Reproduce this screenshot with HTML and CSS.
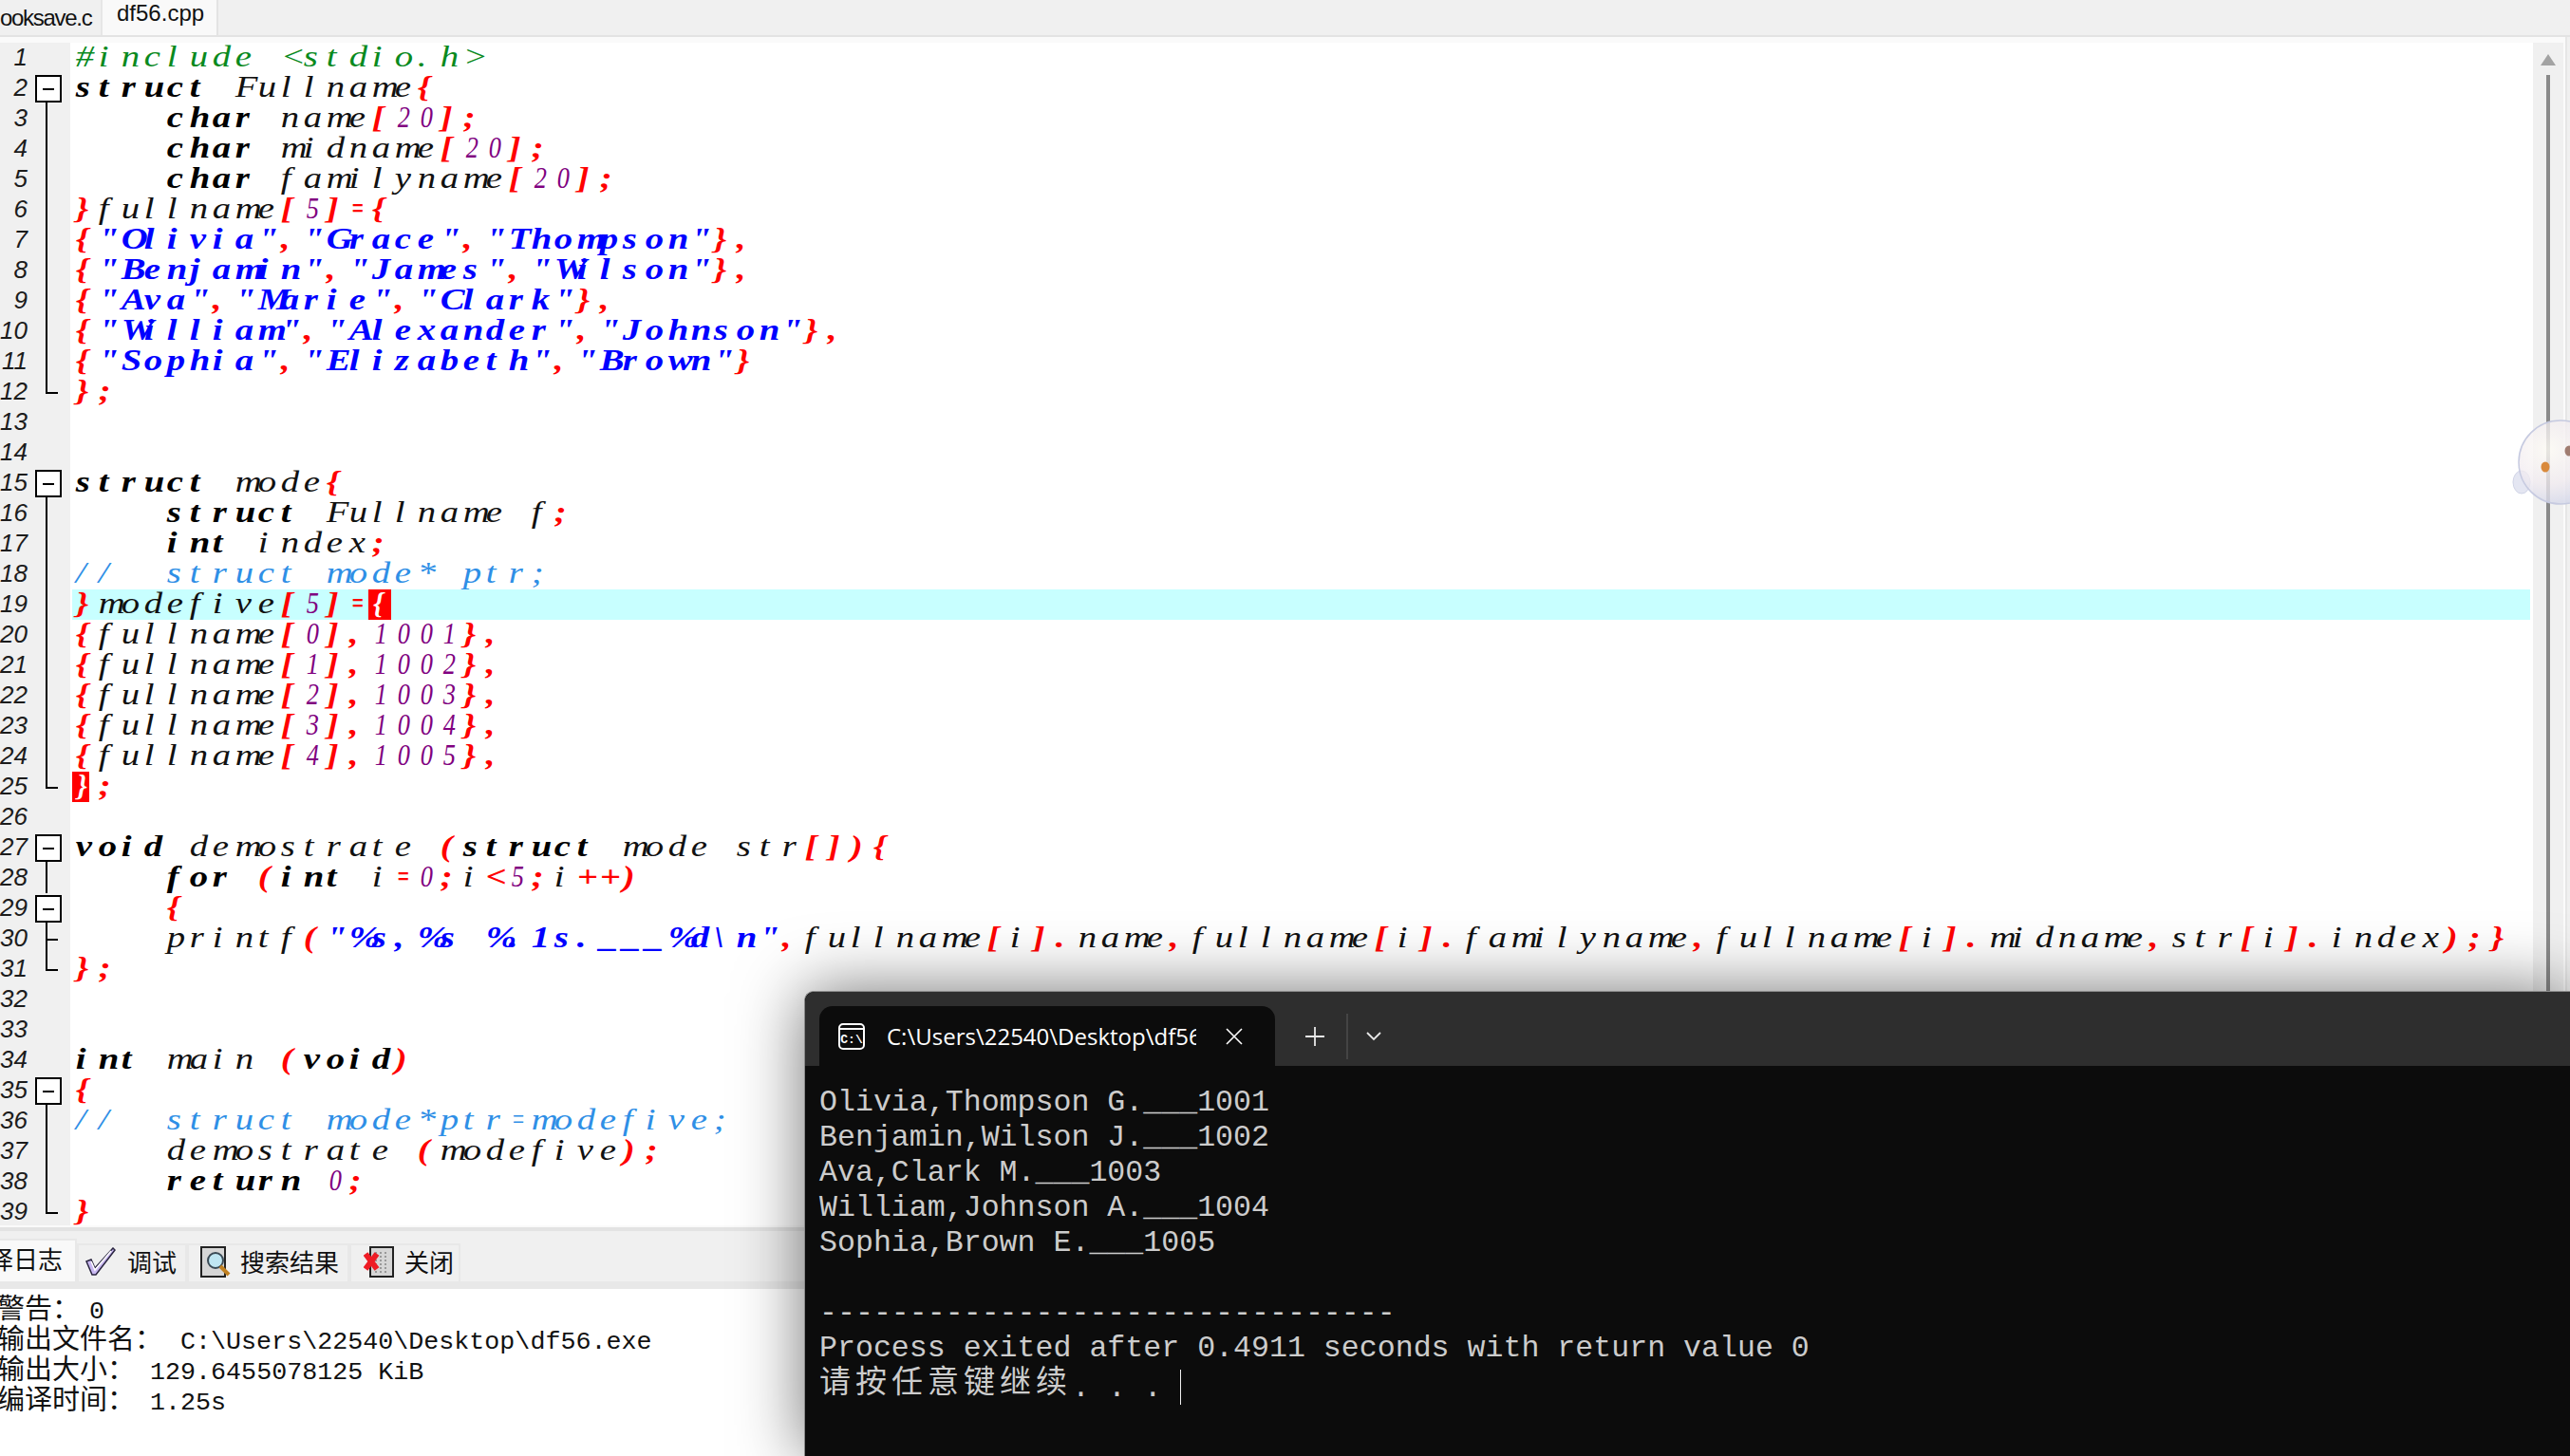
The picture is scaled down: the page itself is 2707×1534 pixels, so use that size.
FILE: index.html
```html
<!DOCTYPE html>
<html lang="zh">
<head>
<meta charset="utf-8">
<title>df56.cpp</title>
<link rel="stylesheet" href="styles.css">
</head>
<body>
<div class="ide">
  <div class="filetabs">
    <div class="filetab">ooksave.c</div>
    <div class="filetab active">df56.cpp</div>
  </div>
  <div class="frame">
    <div class="editor">
      <div class="lines">
        <div class="row"><span class="ln">1</span><span class="fold"></span><div class="code"><span class="p">#include &lt;stdio.h&gt;</span></div></div>
        <div class="row"><span class="ln">2</span><span class="fold open"></span><div class="code"><span class="k">struct</span> Fullname<span class="o">{</span></div></div>
        <div class="row"><span class="ln">3</span><span class="fold mid"></span><div class="code">    <span class="k">char</span> name<span class="o">[</span><span class="n">20</span><span class="o">];</span></div></div>
        <div class="row"><span class="ln">4</span><span class="fold mid"></span><div class="code">    <span class="k">char</span> midname<span class="o">[</span><span class="n">20</span><span class="o">];</span></div></div>
        <div class="row"><span class="ln">5</span><span class="fold mid"></span><div class="code">    <span class="k">char</span> familyname<span class="o">[</span><span class="n">20</span><span class="o">];</span></div></div>
        <div class="row"><span class="ln">6</span><span class="fold mid"></span><div class="code"><span class="o">}</span>fullname<span class="o">[</span><span class="n">5</span><span class="o">]<span class="eq">=</span>{</span></div></div>
        <div class="row"><span class="ln">7</span><span class="fold mid"></span><div class="code"><span class="o">{</span><span class="s">"Olivia"</span><span class="o">,</span><span class="s">"Grace"</span><span class="o">,</span><span class="s">"Thompson"</span><span class="o">},</span></div></div>
        <div class="row"><span class="ln">8</span><span class="fold mid"></span><div class="code"><span class="o">{</span><span class="s">"Benjamin"</span><span class="o">,</span><span class="s">"James"</span><span class="o">,</span><span class="s">"Wilson"</span><span class="o">},</span></div></div>
        <div class="row"><span class="ln">9</span><span class="fold mid"></span><div class="code"><span class="o">{</span><span class="s">"Ava"</span><span class="o">,</span><span class="s">"Marie"</span><span class="o">,</span><span class="s">"Clark"</span><span class="o">},</span></div></div>
        <div class="row"><span class="ln">10</span><span class="fold mid"></span><div class="code"><span class="o">{</span><span class="s">"William"</span><span class="o">,</span><span class="s">"Alexander"</span><span class="o">,</span><span class="s">"Johnson"</span><span class="o">},</span></div></div>
        <div class="row"><span class="ln">11</span><span class="fold mid"></span><div class="code"><span class="o">{</span><span class="s">"Sophia"</span><span class="o">,</span><span class="s">"Elizabeth"</span><span class="o">,</span><span class="s">"Brown"</span><span class="o">}</span></div></div>
        <div class="row"><span class="ln">12</span><span class="fold end"></span><div class="code"><span class="o">};</span></div></div>
        <div class="row"><span class="ln">13</span><span class="fold"></span><div class="code"></div></div>
        <div class="row"><span class="ln">14</span><span class="fold"></span><div class="code"></div></div>
        <div class="row"><span class="ln">15</span><span class="fold open"></span><div class="code"><span class="k">struct</span> mode<span class="o">{</span></div></div>
        <div class="row"><span class="ln">16</span><span class="fold mid"></span><div class="code">    <span class="k">struct</span> Fullname f<span class="o">;</span></div></div>
        <div class="row"><span class="ln">17</span><span class="fold mid"></span><div class="code">    <span class="k">int</span> index<span class="o">;</span></div></div>
        <div class="row"><span class="ln">18</span><span class="fold mid"></span><div class="code"><span class="c">//  struct mode* ptr;</span></div></div>
        <div class="row"><span class="ln">19</span><span class="fold mid"></span><div class="code current"><span class="o">}</span>modefive<span class="o">[</span><span class="n">5</span><span class="o">]<span class="eq">=</span></span><span class="brace">{</span></div></div>
        <div class="row"><span class="ln">20</span><span class="fold mid"></span><div class="code"><span class="o">{</span>fullname<span class="o">[</span><span class="n">0</span><span class="o">],</span><span class="n">1001</span><span class="o">},</span></div></div>
        <div class="row"><span class="ln">21</span><span class="fold mid"></span><div class="code"><span class="o">{</span>fullname<span class="o">[</span><span class="n">1</span><span class="o">],</span><span class="n">1002</span><span class="o">},</span></div></div>
        <div class="row"><span class="ln">22</span><span class="fold mid"></span><div class="code"><span class="o">{</span>fullname<span class="o">[</span><span class="n">2</span><span class="o">],</span><span class="n">1003</span><span class="o">},</span></div></div>
        <div class="row"><span class="ln">23</span><span class="fold mid"></span><div class="code"><span class="o">{</span>fullname<span class="o">[</span><span class="n">3</span><span class="o">],</span><span class="n">1004</span><span class="o">},</span></div></div>
        <div class="row"><span class="ln">24</span><span class="fold mid"></span><div class="code"><span class="o">{</span>fullname<span class="o">[</span><span class="n">4</span><span class="o">],</span><span class="n">1005</span><span class="o">},</span></div></div>
        <div class="row"><span class="ln">25</span><span class="fold end"></span><div class="code"><span class="brace short">}</span><span class="o">;</span></div></div>
        <div class="row"><span class="ln">26</span><span class="fold"></span><div class="code"></div></div>
        <div class="row"><span class="ln">27</span><span class="fold open"></span><div class="code"><span class="k">void</span> demostrate <span class="o">(</span><span class="k">struct</span> mode str<span class="o">[]){</span></div></div>
        <div class="row"><span class="ln">28</span><span class="fold mid"></span><div class="code">    <span class="k">for</span> <span class="o">(</span><span class="k">int</span> i<span class="o eq">=</span><span class="n">0</span><span class="o">;</span>i<span class="o">&lt;</span><span class="n">5</span><span class="o">;</span>i<span class="o">++)</span></div></div>
        <div class="row"><span class="ln">29</span><span class="fold open"></span><div class="code">    <span class="o">{</span></div></div>
        <div class="row"><span class="ln">30</span><span class="fold tick"></span><div class="code">    printf<span class="o">(</span><span class="s">"%s,%s %.1s.___%d\n"</span><span class="o">,</span>fullname<span class="o">[</span>i<span class="o">].</span>name<span class="o">,</span>fullname<span class="o">[</span>i<span class="o">].</span>familyname<span class="o">,</span>fullname<span class="o">[</span>i<span class="o">].</span>midname<span class="o">,</span>str<span class="o">[</span>i<span class="o">].</span>index<span class="o">);}</span></div></div>
        <div class="row"><span class="ln">31</span><span class="fold end"></span><div class="code"><span class="o">};</span></div></div>
        <div class="row"><span class="ln">32</span><span class="fold"></span><div class="code"></div></div>
        <div class="row"><span class="ln">33</span><span class="fold"></span><div class="code"></div></div>
        <div class="row"><span class="ln">34</span><span class="fold"></span><div class="code"><span class="k">int</span> main <span class="o">(</span><span class="k">void</span><span class="o">)</span></div></div>
        <div class="row"><span class="ln">35</span><span class="fold open"></span><div class="code"><span class="o">{</span></div></div>
        <div class="row"><span class="ln">36</span><span class="fold mid"></span><div class="code"><span class="c">//  struct mode*ptr<span class="eq">=</span>modefive;</span></div></div>
        <div class="row"><span class="ln">37</span><span class="fold mid"></span><div class="code">    demostrate <span class="o">(</span>modefive<span class="o">);</span></div></div>
        <div class="row"><span class="ln">38</span><span class="fold mid"></span><div class="code">    <span class="k">return</span> <span class="n">0</span><span class="o">;</span></div></div>
        <div class="row"><span class="ln">39</span><span class="fold end"></span><div class="code"><span class="o">}</span></div></div>
      </div>
      <div class="scrollbar">
        <span class="arrow"></span>
        <span class="thumb"></span>
      </div>
    </div>
  </div>
  <div class="panel">
    <div class="paneltabs">
      <div class="ptab active"><span class="clip">译日志</span></div>
      <div class="ptab">
        <svg class="picon" width="34" height="30" viewBox="0 0 34 30"><path d="M2 15 L7 13 L11 22 L30 1 L32 3 L12 29 L8 29 Z" fill="#c9b8f2" stroke="#2a2540" stroke-width="1.5"/><path d="M7 15 L11 24 L28 4" fill="none" stroke="#fff" stroke-width="1.5"/></svg>
        调试
      </div>
      <div class="ptab">
        <svg class="picon" width="32" height="33" viewBox="0 0 32 33"><rect x="1" y="1" width="25" height="31" fill="#d6d6d6" stroke="#222" stroke-width="2"/><circle cx="16" cy="15" r="8" fill="#bfe6f2" stroke="#3a4a55" stroke-width="2"/><path d="M21 21 L30 30" stroke="#c08020" stroke-width="4"/></svg>
        搜索结果
      </div>
      <div class="ptab">
        <svg class="picon" width="32" height="33" viewBox="0 0 32 33"><rect x="7" y="1" width="24" height="31" fill="#d6d6d6" stroke="#222" stroke-width="2"/><path d="M13 6 V28 M18 6 V28 M23 6 V28" stroke="#999" stroke-width="2" stroke-dasharray="2 2"/><path d="M2 8 L14 24 M14 8 L2 24" stroke="#ee1c25" stroke-width="6"/></svg>
        关闭
      </div>
    </div>
    <div class="log">
      <div class="logline tight"><span class="cjk">警告：</span> 0</div>
      <div class="logline wide"><span class="cjk">输出文件名：</span> C:\Users\22540\Desktop\df56.exe</div>
      <div class="logline"><span class="cjk">输出大小：</span> 129.6455078125 KiB</div>
      <div class="logline"><span class="cjk">编译时间：</span> 1.25s</div>
    </div>
  </div>
</div>

<svg class="mascot" width="80" height="100" viewBox="0 0 80 100">
  <defs>
    <radialGradient id="bubble" cx="35%" cy="35%" r="75%">
      <stop offset="0" stop-color="#fffdf6" stop-opacity=".8"/>
      <stop offset=".55" stop-color="#f1ebf0" stop-opacity=".75"/>
      <stop offset="1" stop-color="#ccd2e8" stop-opacity=".85"/>
    </radialGradient>
  </defs>
  <ellipse cx="11" cy="68" rx="9" ry="12" fill="#e4e6f2" stroke="#d0d4e6"/>
  <circle cx="52" cy="47" r="44" fill="url(#bubble)" stroke="#c6cae0" stroke-width="1.5"/>
  <ellipse cx="36" cy="52" rx="4.5" ry="5.5" fill="#d98a3c"/>
  <ellipse cx="61" cy="35" rx="4.5" ry="5.5" fill="#a07c70"/>
</svg>

<div class="terminal">
  <div class="titlebar">
    <div class="termtab">
      <svg class="termicon" width="28" height="28" viewBox="0 0 28 28"><rect x="1" y="1" width="26" height="26" rx="4" fill="none" stroke="#fff" stroke-width="2"/><path d="M1 6 H27" stroke="#fff" stroke-width="2"/><text x="14" y="21" text-anchor="middle" class="termicon-text">C:\</text></svg>
      <span class="termtitle">C:\Users\22540\Desktop\df56.exe</span>
      <svg class="termclose" width="18" height="18" viewBox="0 0 18 18"><path d="M1 1 L17 17 M17 1 L1 17" stroke="#fff" stroke-width="1.6"/></svg>
    </div>
    <svg class="termplus" width="22" height="22" viewBox="0 0 22 22"><path d="M11 1 V21 M1 11 H21" stroke="#e8e8e8" stroke-width="1.8"/></svg>
    <span class="termdiv"></span>
    <svg class="termchev" width="16" height="10" viewBox="0 0 16 10"><path d="M1 1 L8 8 L15 1" fill="none" stroke="#e8e8e8" stroke-width="1.8"/></svg>
  </div>
<pre class="console">Olivia,Thompson G.___1001
Benjamin,Wilson J.___1002
Ava,Clark M.___1003
William,Johnson A.___1004
Sophia,Brown E.___1005

--------------------------------
Process exited after 0.4911 seconds with return value 0
<span class="prompt">请按任意键继续</span>. . . <span class="caret"></span></pre>
</div>
<script src="cells.js"></script>
</body>
</html>
```

FILE: styles.css
```css
* { box-sizing: border-box; }
html, body { margin: 0; height: 100%; overflow: hidden; }
body {
  position: relative;
  width: 2707px;
  height: 1534px;
  background: #f0f0f0;
  font-family: "Liberation Sans", sans-serif;
  color: #000;
}
.ide { display: flex; flex-direction: column; height: 100%; }

/* file tabs */
.filetabs {
  display: flex;
  height: 39px;
  flex: none;
  background: #f0f0f0;
  border-bottom: 2px solid #e3e3e3;
}
.filetab {
  height: 37px;
  font-size: 24px;
  line-height: 28px;
  color: #111;
}
.filetab:first-child {
  width: 108px;
  letter-spacing: -1.3px;
  white-space: nowrap;
  border-right: 2px solid #e6e6e6;
  padding-top: 5px;
}
.filetab.active {
  width: 122px;
  padding-left: 15px;
  background: #f9f9f9;
  border-right: 2px solid #e3e3e3;
}

/* editor */
.frame {
  flex: none;
  height: 1254px;
  width: 2704px;
  padding-top: 6px;
  padding-right: 2px;
  background: #fafafa;
  border-right: 2px solid #e6e6e6;
}
.editor { display: flex; height: 1246px; overflow: hidden; }
.lines { flex: 1; min-width: 0; background: #fff; }
.row { display: flex; height: 32px; }
.ln {
  width: 37px;
  flex: none;
  padding-right: 8px;
  text-align: right;
  font-size: 26px;
  font-style: italic;
  line-height: 30px;
  color: #1c1c1c;
  background: #f0f0f0;
}
.fold {
  width: 37px;
  flex: none;
  background-color: #f0f0f0;
  background-repeat: no-repeat;
  border-right: 13px solid #f0f0f0;
}
.fold.mid { background-image: linear-gradient(#000, #000); background-position: 11px 0; background-size: 2px 100%; }
.fold.end {
  background-image: linear-gradient(#000, #000), linear-gradient(#000, #000);
  background-position: 11px 0, 11px 16px;
  background-size: 2px 18px, 13px 2px;
}
.fold.tick {
  background-image: linear-gradient(#000, #000), linear-gradient(#000, #000);
  background-position: 11px 0, 11px 16px;
  background-size: 2px 100%, 13px 2px;
}
.fold.open { background-image: linear-gradient(#000, #000); background-position: 11px 27px; background-size: 2px 5px; }
.fold.open::before {
  content: "";
  display: block;
  margin-top: 2px;
  height: 25px;
  width: 24px;
  border: 2px solid #000;
  background: #fff linear-gradient(#000, #000) center / 12px 2px no-repeat;
}
.code {
  flex: 1;
  min-width: 0;
  margin-left: 2px;
  margin-right: 3px;
  white-space: pre;
  font-family: "Liberation Serif", serif;
  font-style: italic;
  font-size: 31px;
  line-height: 30px;
  color: #111;
}
.code.current { background: #c8ffff; }
.cell { display: inline-block; width: 24px; height: 32px; vertical-align: top; }
.glyph { display: inline-block; transform: scaleX(1.25); transform-origin: 5px 50%; margin-left: 5px; }
.k { font-weight: 700; color: #000; }
.s { font-weight: 700; color: #0000ff; }
.o { font-weight: 700; color: #ff0000; }
.n { color: #800080; }
.n .glyph { transform: scaleX(0.85); margin-left: 6px; }
.eq .glyph { transform: scaleX(0.7); }
.p { color: #0a8a1e; }
.c { color: #2f8fe6; }
.brace { font-weight: 700; color: #fff; }
.brace .cell { background: #ff0000; }
.brace .glyph { transform: none; }
.brace.short .cell { background: linear-gradient(#ff0000, #ff0000) 0 0 / 18px 100% no-repeat; }

.scrollbar {
  width: 32px;
  flex: none;
  background: #f0f0f0;
  display: flex;
  flex-direction: column;
  align-items: center;
  padding-top: 12px;
}
.arrow {
  width: 0;
  height: 0;
  border-left: 8px solid transparent;
  border-right: 8px solid transparent;
  border-bottom: 12px solid #a3a3a3;
}
.thumb { width: 4px; flex: 1; margin-top: 10px; background: #8a8a8a; }

/* bottom panel */
.panel { flex: 1; display: flex; flex-direction: column; min-height: 0; }
.paneltabs {
  flex: none;
  height: 65px;
  border-top: 4px solid #e3e3e3;
  border-bottom: 8px solid #e8e8e8;
  background: #f0f0f0;
  display: flex;
  align-items: flex-end;
  font-family: "Noto Sans CJK SC", sans-serif;
  font-size: 26px;
  color: #111;
}
.ptab {
  height: 40px;
  padding-bottom: 4px;
  display: flex;
  align-items: center;
  border: 2px solid #e8e8e8;
  border-bottom: 0;
  white-space: nowrap;
  line-height: 34px;
}
.ptab:nth-child(2) { width: 116px; padding-left: 6px; gap: 11px; }
.ptab:nth-child(3) { width: 171px; padding-left: 12px; gap: 10px; }
.ptab:nth-child(4) { width: 117px; padding-left: 13px; gap: 11px; }
.ptab.active {
  width: 81px;
  height: 45px;
  background: #f9f9f9;
  padding: 0 0 5px;
  overflow: hidden;
  border-left: 0;
}
.clip { margin-left: -12px; }
.picon { flex: none; }
.log {
  flex: 1;
  background: #fff;
  padding-top: 2px;
  font-family: "Liberation Mono", monospace;
  font-size: 26.7px;
  line-height: 32px;
  color: #111;
}
.logline { height: 32px; margin-left: -3px; white-space: pre; }
.logline.tight { word-spacing: -6px; }
.logline.wide { word-spacing: 3px; }
.cjk { font-family: "Noto Sans CJK SC", sans-serif; font-size: 29px; line-height: 32px; }

/* mascot peeking from the desktop edge */
.mascot { position: absolute; left: 2645px; top: 440px; }

/* terminal window */
.terminal {
  position: absolute;
  left: 847px;
  top: 1044px;
  right: 0;
  bottom: 0;
  background: #0c0c0c;
  border-top-left-radius: 10px;
  border-left: 1px solid #8a8a8a;
  border-top: 1px solid #8a8a8a;
  box-shadow: 0 0 70px rgba(0, 0, 0, 0.55);
}
.titlebar {
  height: 78px;
  background: #2e2e2e;
  border-top-left-radius: 10px;
  display: flex;
  align-items: center;
  padding-left: 15px;
}
.termtab {
  width: 480px;
  height: 63px;
  margin-top: 15px;
  background: #0c0c0c;
  border-radius: 14px 14px 0 0;
  display: flex;
  align-items: center;
  padding-left: 20px;
  color: #fff;
  flex: none;
}
.termicon { flex: none; }
.termicon-text { font-family: "Liberation Mono", monospace; font-size: 13px; font-weight: 700; fill: #fff; }
.termtitle {
  width: 326px;
  margin-left: 23px;
  overflow: hidden;
  white-space: nowrap;
  flex: none;
  font-family: "Open Sans", sans-serif;
  font-size: 24px;
  line-height: 32px;
}
.termclose { flex: none; margin-left: 31px; }
.termplus { flex: none; margin: 15px 0 0 31px; }
.termdiv { width: 2px; height: 48px; flex: none; margin: 15px 0 0 22px; background: #454545; }
.termchev { flex: none; margin: 15px 0 0 19px; }
.console {
  margin: 0;
  padding: 20px 0 0 15px;
  font-family: "Liberation Mono", monospace;
  font-size: 31.6px;
  line-height: 37px;
  color: #cccccc;
}
.prompt {
  font-family: "Noto Sans CJK SC", sans-serif;
  font-size: 33px;
  letter-spacing: 5px;
  line-height: 37px;
  position: relative;
  top: -4px;
}
.caret {
  display: inline-block;
  width: 1px;
  height: 37px;
  background: #f0f0f0;
  vertical-align: -9px;
}
```

FILE: cells.js
```js
// The editor draws every character in a fixed-width cell, whatever the glyph's own width.
document.querySelectorAll(".code").forEach(function (line) {
  var walker = document.createTreeWalker(line, NodeFilter.SHOW_TEXT);
  var nodes = [];
  while (walker.nextNode()) nodes.push(walker.currentNode);
  nodes.forEach(function (node) {
    var frag = document.createDocumentFragment();
    Array.from(node.nodeValue).forEach(function (ch) {
      var cell = document.createElement("span");
      cell.className = "cell";
      var glyph = document.createElement("span");
      glyph.className = "glyph";
      glyph.textContent = ch;
      cell.appendChild(glyph);
      frag.appendChild(cell);
    });
    node.parentNode.replaceChild(frag, node);
  });
});
```
